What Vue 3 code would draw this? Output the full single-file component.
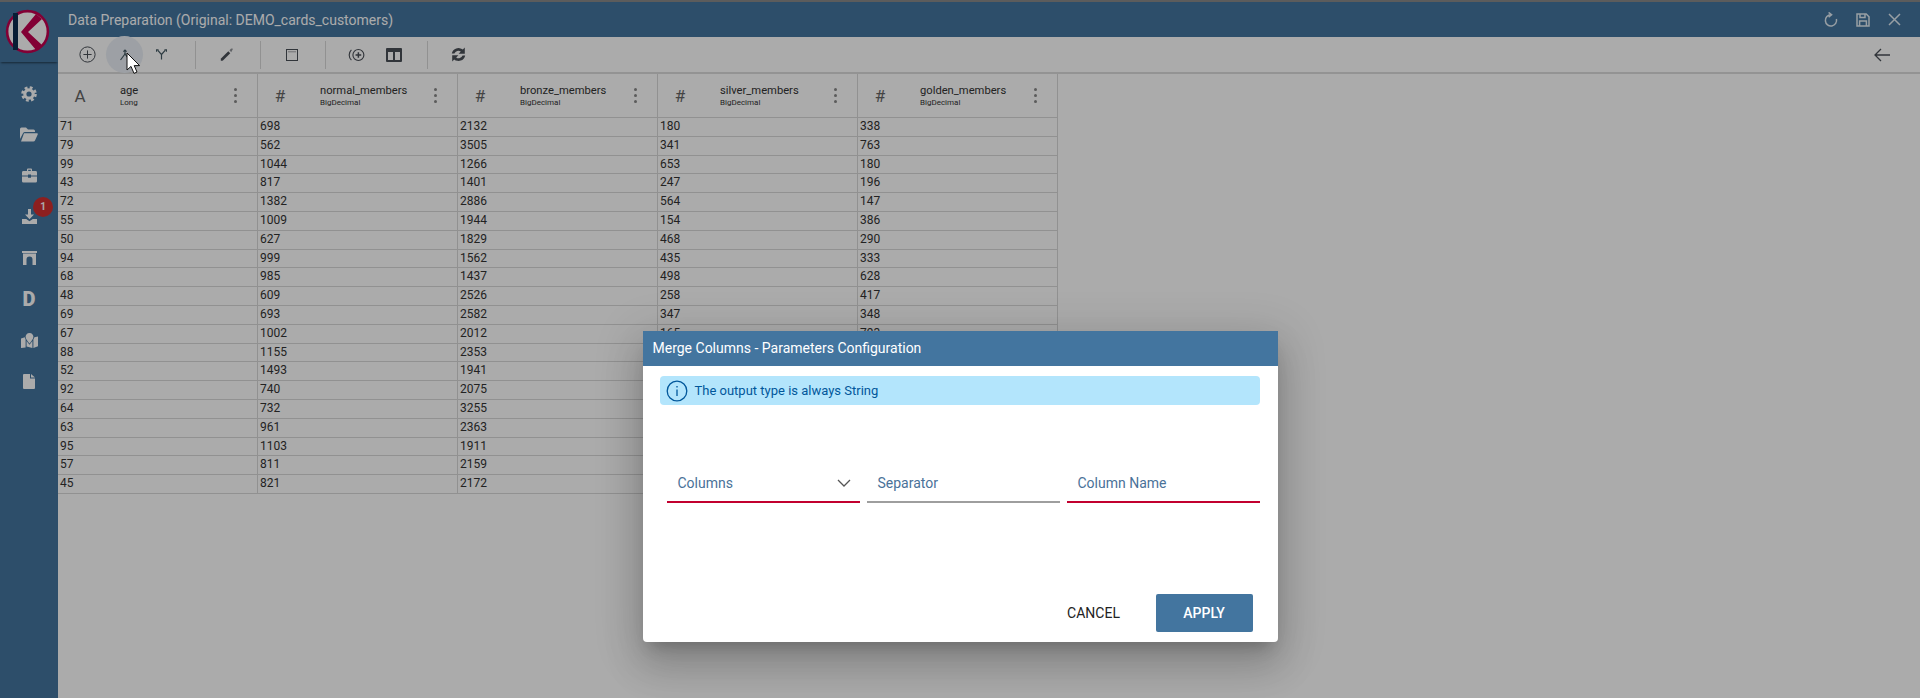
<template>
  <div class="app">
    <aside class="sidebar">
      <div class="logo">
        <svg width="46" height="46" viewBox="0 0 46 46">
          <circle cx="22.5" cy="23.5" r="20.4" fill="#fff" stroke="#c2004f" stroke-width="2.6" />
          <rect x="8" y="5" width="5" height="37" fill="#0d2c4f" />
          <path d="M31 6 L16 24 L31 42 L37 37 L23 24 L37 11 Z" fill="#c2004f" />
        </svg>
      </div>
      <nav class="side-nav">
        <div class="side-item">
          <svg width="16" height="16" viewBox="0 0 16 16" fill="none" stroke="currentColor">
            <circle cx="8" cy="8" r="4.2" stroke-width="3.2" />
            <circle cx="8" cy="8" r="6.5" stroke-width="2.6" stroke-dasharray="2.8 2.3" />
          </svg>
        </div>
        <div class="side-item">
          <svg width="18" height="15" viewBox="0 0 18 15" fill="currentColor">
            <path d="M0 2 Q0 .5 1.5 .5 H6 L8 2.5 H13.5 Q15 2.5 15 4 V5 H5 Q3.6 5 3 6.2 L0 12 Z" />
            <path d="M4 6.2 H17 Q18.2 6.2 17.7 7.4 L15 13.4 Q14.6 14.5 13.4 14.5 H1 Z" />
          </svg>
        </div>
        <div class="side-item">
          <svg width="15" height="15" viewBox="0 0 15 15" fill="currentColor">
            <path d="M5 3 V1.6 Q5 .6 6 .6 H9 Q10 .6 10 1.6 V3 H13.6 Q15 3 15 4.4 V7.4 H9 V6.4 H6 V7.4 H0 V4.4 Q0 3 1.4 3 Z M6.2 1.8 V3 H8.8 V1.8 Z" fill-rule="evenodd" />
            <path d="M0 8.6 H6 V9.8 H9 V8.6 H15 V13.2 Q15 14.6 13.6 14.6 H1.4 Q0 14.6 0 13.2 Z" />
          </svg>
        </div>
        <div class="side-item">
          <svg width="15" height="15" viewBox="0 0 15 15" fill="currentColor">
            <path d="M6 0 H9 V5.4 H12 L7.5 10.2 L3 5.4 H6 Z" />
            <path d="M0 10 H4.2 L7.5 12.2 L10.8 10 H15 V15 H0 Z" />
          </svg>
          <span class="badge">1</span>
        </div>
        <div class="side-item">
          <svg width="15" height="14" viewBox="0 0 15 14" fill="currentColor">
            <path d="M0 0 H15 V2 H0 Z" />
            <path d="M1 2.5 H14 V14 H10.5 V8.5 Q10.5 5.5 7.5 5.5 Q4.5 5.5 4.5 8.5 V14 H1 Z" />
          </svg>
        </div>
        <div class="side-item side-letter">D</div>
        <div class="side-item">
          <svg width="17" height="15" viewBox="0 0 17 15" fill="currentColor">
            <path d="M8.5 0 C6 0 4.6 1.9 4.6 3.8 C4.6 5.8 7 8.8 8.5 10.6 C10 8.8 12.4 5.8 12.4 3.8 C12.4 1.9 11 0 8.5 0 Z" />
            <path d="M0 5.6 L3.8 4.2 L4.6 6.4 V14.4 L0 15 Z M5.6 8 L8.5 11.8 L11.4 8 V15 L5.6 13.6 Z M12.4 6.4 L13.4 4.2 L17 3.6 V13.2 L12.4 15 Z" />
          </svg>
        </div>
        <div class="side-item">
          <svg width="12" height="15" viewBox="0 0 12 15" fill="currentColor">
            <path d="M1 0 H7 V4.5 H12 V14 Q12 15 11 15 H1 Q0 15 0 14 V1 Q0 0 1 0 Z" />
            <path d="M8 0 L12 3.6 H8 Z" />
          </svg>
        </div>
      </nav>
    </aside>

    <main class="main">
      <header class="title-bar">
        <span class="title-text">Data Preparation (Original: DEMO_cards_customers)</span>
        <div class="title-actions">
          <button class="title-btn">
            <svg width="16" height="16" viewBox="0 0 16 16" fill="none" stroke="currentColor" stroke-width="1.5">
              <path d="M8 2.8 A5.6 5.6 0 1 0 13.4 7" />
              <path d="M5.6 .4 L8.6 2.8 L5.6 5.2" />
            </svg>
          </button>
          <button class="title-btn">
            <svg width="14" height="14" viewBox="0 0 14 14" fill="none" stroke="currentColor" stroke-width="1.5">
              <path d="M1 1 H10.2 L13 3.8 V13 H1 Z" />
              <path d="M4 1 V4.4 H9 V1" />
              <path d="M3.6 13 V8 H10.4 V13" />
            </svg>
          </button>
          <button class="title-btn">
            <svg width="13" height="13" viewBox="0 0 13 13" fill="none" stroke="currentColor" stroke-width="1.5">
              <path d="M1 1 L12 12 M12 1 L1 12" />
            </svg>
          </button>
        </div>
      </header>

      <div class="toolbar">
        <button class="tool-btn">
          <svg width="17" height="17" viewBox="0 0 17 17" fill="none" stroke="currentColor" stroke-width="1">
            <circle cx="8.5" cy="8.5" r="7.6" />
            <path d="M8.5 4.4 V12.6 M4.4 8.5 H12.6" />
          </svg>
        </button>
        <button class="tool-btn tool-hover">
          <svg width="12" height="12" viewBox="0 0 12 12" fill="none" stroke="#455a64" stroke-width="1.2">
            <path d="M1.5 11 L6 5 L10.5 11" />
            <path d="M6 5 V1 M4.4 2.6 L6 1 L7.6 2.6" />
          </svg>
        </button>
        <button class="tool-btn">
          <svg width="11" height="11" viewBox="0 0 12 12" fill="none" stroke="#455a64" stroke-width="1.3">
            <path d="M6 11.5 V6 L2 1.6 M6 6 L10 1.6" />
            <path d="M.6 3 V1 H2.8 M9.2 1 H11.4 V3" />
          </svg>
        </button>
        <span class="tool-sep"></span>
        <button class="tool-btn">
          <svg width="14" height="13" viewBox="0 0 16 16" fill="currentColor">
            <path d="M.6 13 L9.6 4 L12 6.4 L3 15.4 Q1.6 15.8 .4 15.6 Q.2 14.4 .6 13 Z" />
            <path d="M11 2.8 L13.2 .6 L15.4 .8 L13.2 5.2 Z" opacity=".6" />
          </svg>
        </button>
        <span class="tool-sep"></span>
        <button class="tool-btn">
          <svg width="12" height="12" viewBox="0 0 12 12" fill="none" stroke="currentColor" stroke-width="1">
            <rect x=".5" y=".5" width="11" height="11" />
            <path d="M2.5 2.8 H9.5" stroke-dasharray="1 1" />
          </svg>
        </button>
        <span class="tool-sep"></span>
        <button class="tool-btn">
          <svg width="17" height="14" viewBox="0 0 18 14" fill="none" stroke="currentColor" stroke-width="1.2">
            <circle cx="11" cy="7" r="5.8" />
            <path d="M11 4 V10 M8 7 H14" stroke-width="1.6" />
            <path d="M3.6 1.6 A7.4 7.4 0 0 0 3.6 12.4" />
          </svg>
        </button>
        <button class="tool-btn">
          <svg width="16" height="14" viewBox="0 0 16 14" fill="currentColor">
            <path d="M1 0 H15 Q16 0 16 1 V13 Q16 14 15 14 H1 Q0 14 0 13 V1 Q0 0 1 0 Z M2 4 V12 H7 V4 Z M9 4 V12 H14 V4 Z" fill-rule="evenodd" />
          </svg>
        </button>
        <span class="tool-sep"></span>
        <button class="tool-btn">
          <svg width="15" height="15" viewBox="0 0 15 15" fill="currentColor">
            <path d="M.8 6.4 A6.8 6.8 0 0 1 11.8 2.6 L13.8 .6 V6.8 H7.6 L9.8 4.6 A4.2 4.2 0 0 0 3.4 6.4 Z" />
            <path d="M14.2 8.6 A6.8 6.8 0 0 1 3.2 12.4 L1.2 14.4 V8.2 H7.4 L5.2 10.4 A4.2 4.2 0 0 0 11.6 8.6 Z" />
          </svg>
        </button>
        <button class="tool-btn tool-back">
          <svg width="16" height="14" viewBox="0 0 16 14" fill="none" stroke="currentColor" stroke-width="1.3">
            <path d="M16 7 H1 M7 1 L1 7 L7 13" />
          </svg>
        </button>
      </div>

      <div class="grid">
        <div class="grid-head">
          <div v-for="col in columns" :key="col.name" class="head-cell">
            <span class="type-icon">{{ col.icon }}</span>
            <div class="head-text">
              <div class="col-name">{{ col.name }}</div>
              <div class="col-type">{{ col.type }}</div>
            </div>
            <span class="kebab"><i></i><i></i><i></i></span>
          </div>
        </div>
        <div v-for="(row, index) in rows" :key="index" class="grid-row">
          <div v-for="(value, i) in row" :key="i" class="grid-cell">{{ value }}</div>
        </div>
      </div>
    </main>

    <!-- dialog + dimmed page -->
    <div class="overlay">
      <section class="dialog">
        <div class="dialog-title">Merge Columns - Parameters Configuration</div>
        <div class="dialog-body">
          <div class="alert">
            <svg width="22" height="22" viewBox="0 0 22 22" fill="none" stroke="#01579b" stroke-width="1.3">
              <circle cx="11" cy="11" r="9.8" />
              <path d="M11 9.6 V16" />
              <path d="M11 6 V7.6" />
            </svg>
            <span>The output type is always String</span>
          </div>
          <div class="fields">
            <div class="field field-error">
              <span>Columns</span>
              <svg width="14" height="8" viewBox="0 0 14 8" fill="none" stroke="#555" stroke-width="1.3">
                <path d="M1 1 L7 7 L13 1" />
              </svg>
            </div>
            <div class="field"><span>Separator</span></div>
            <div class="field field-error"><span>Column Name</span></div>
          </div>
        </div>
        <div class="dialog-actions">
          <button class="btn-cancel">CANCEL</button>
          <button class="btn-apply">APPLY</button>
        </div>
      </section>
    </div>

    <svg class="cursor" width="15" height="23" viewBox="0 0 15 23">
      <path d="M1 1 V18 L5 14.4 L8 21.4 L11 20 L8.2 13.6 H13.6 Z" fill="#fff" stroke="#111" stroke-width="1" />
    </svg>
  </div>
</template>

<script setup>
const columns = [
  { name: 'age', type: 'Long', icon: 'A' },
  { name: 'normal_members', type: 'BigDecimal', icon: '#' },
  { name: 'bronze_members', type: 'BigDecimal', icon: '#' },
  { name: 'silver_members', type: 'BigDecimal', icon: '#' },
  { name: 'golden_members', type: 'BigDecimal', icon: '#' },
]

const rows = [
  [71, 698, 2132, 180, 338],
  [79, 562, 3505, 341, 763],
  [99, 1044, 1266, 653, 180],
  [43, 817, 1401, 247, 196],
  [72, 1382, 2886, 564, 147],
  [55, 1009, 1944, 154, 386],
  [50, 627, 1829, 468, 290],
  [94, 999, 1562, 435, 333],
  [68, 985, 1437, 498, 628],
  [48, 609, 2526, 258, 417],
  [69, 693, 2582, 347, 348],
  [67, 1002, 2012, 165, 793],
  // the last two columns of these rows are behind the dialog
  [88, 1155, 2353, '', ''],
  [52, 1493, 1941, '', ''],
  [92, 740, 2075, '', ''],
  [64, 732, 3255, '', ''],
  [63, 961, 2363, '', ''],
  [95, 1103, 1911, '', ''],
  [57, 811, 2159, '', ''],
  [45, 821, 2172, '', ''],
]
</script>

<style>
html,
body {
  margin: 0;
  overflow: hidden;
}
</style>

<style scoped>
.app {
  position: relative;
  display: flex;
  width: 1920px;
  height: 698px;
  box-sizing: border-box;
  border-top: 2px solid #5c5c5c;
  background: #fff;
  font-family: Roboto, "Liberation Sans", sans-serif;
  color: #333;
  overflow: hidden;
}

button {
  border: none;
  background: none;
  padding: 0;
  font-family: inherit;
}

/* left bar */
.sidebar {
  width: 58px;
  flex-shrink: 0;
  background: #43759f;
  color: #fff;
}

.logo {
  height: 60px;
  box-sizing: border-box;
  padding: 6px 0 0 5px;
  box-shadow: 0 2px 2px -1px rgba(0, 0, 0, 0.5);
}

.logo svg {
  display: block;
}

.side-nav {
  padding-top: 11px;
}

.side-item {
  position: relative;
  height: 41.1px;
  display: flex;
  align-items: center;
  justify-content: center;
}

.side-letter {
  font-size: 20px;
  font-weight: 900;
}

.badge {
  position: absolute;
  top: 1px;
  left: 33px;
  width: 20px;
  height: 20px;
  border-radius: 50%;
  background: #d32f2f;
  color: #fff;
  font-size: 10px;
  font-weight: 700;
  line-height: 20px;
  text-align: center;
}

.main {
  flex: 1;
  min-width: 0;
}

/* title bar */
.title-bar {
  height: 35px;
  display: flex;
  align-items: center;
  justify-content: space-between;
  padding: 0 10px;
  background: #43759f;
  color: #fff;
}

.title-text {
  font-size: 14px;
}

.title-actions {
  display: flex;
  color: #fff;
}

.title-btn {
  width: 31.5px;
  height: 35px;
  display: flex;
  align-items: center;
  justify-content: center;
  color: #e3edf5;
}

/* toolbar */
.toolbar {
  height: 35px;
  display: flex;
  align-items: center;
  padding: 0 20px 0 11px;
  background: #fff;
  border-bottom: 2px solid #dcdcdc;
  color: #555;
}

.tool-btn {
  width: 37px;
  height: 35px;
  flex-shrink: 0;
  display: flex;
  align-items: center;
  justify-content: center;
  color: #4a4f57;
}

.tool-hover {
  height: 37px;
  border-radius: 50%;
  background: #eaeff6;
}

.tool-sep {
  width: 1px;
  height: 28px;
  margin: 0 12px 0 15px;
  flex-shrink: 0;
  background: #d8d8d8;
}

.tool-back {
  margin-left: auto;
}

/* data grid */
.grid {
  width: 1000px;
}

.grid-head,
.grid-row {
  display: flex;
  border-bottom: 1px solid #d8d8d8;
  box-sizing: border-box;
}

.grid-head {
  height: 44px;
}

.grid-row {
  height: 18.8px;
}

.head-cell {
  width: 200px;
  box-sizing: border-box;
  display: flex;
  align-items: center;
  border-right: 1px solid #d8d8d8;
}

.type-icon {
  width: 44px;
  margin-right: 2px;
  text-align: center;
  font-size: 17px;
  color: #666;
}

.head-text {
  flex: 1;
  margin-left: 16px;
  color: #333;
}

.col-name {
  font-size: 11.2px;
  line-height: 14px;
}

.col-type {
  font-size: 8px;
  line-height: 9px;
}

.kebab {
  width: 3px;
  margin-right: 20px;
  display: flex;
  flex-direction: column;
  gap: 3.3px;
}

.kebab i {
  width: 3px;
  height: 3px;
  border-radius: 50%;
  background: #888;
}

.grid-cell {
  width: 200px;
  box-sizing: border-box;
  padding-left: 2px;
  border-right: 1px solid #d8d8d8;
  font-size: 12px;
  line-height: 17.8px;
  color: #333;
}

/* dialog */
.overlay {
  position: absolute;
  inset: -2px 0 0 0;
  display: flex;
  justify-content: center;
  align-items: flex-start;
  padding-top: 331px;
  background: rgba(0, 0, 0, 0.33);
}

.dialog {
  width: 635px;
  height: 311px;
  display: flex;
  flex-direction: column;
  background: #fff;
  border-radius: 0 0 4px 4px;
  box-shadow: 0 11px 15px -7px rgba(0, 0, 0, 0.2), 0 24px 38px 3px rgba(0, 0, 0, 0.14), 0 9px 46px 8px rgba(0, 0, 0, 0.12);
}

.dialog-title {
  height: 35px;
  padding-left: 10px;
  background: #43759f;
  color: #fff;
  font-size: 14px;
  line-height: 35px;
}

.dialog-body {
  padding: 10px 18px 0 17px;
}

.alert {
  height: 29px;
  display: flex;
  align-items: center;
  gap: 7px;
  padding-left: 6px;
  background: #b3e5fc;
  border-radius: 4px;
  color: #01579b;
  font-size: 13px;
}

.fields {
  display: flex;
  gap: 7px;
  margin: 70px 0 0 7px;
}

.field {
  flex: 1;
  height: 28px;
  display: flex;
  align-items: center;
  justify-content: space-between;
  box-sizing: border-box;
  padding: 0 9px 10px 11px;
  border-bottom: 2px solid #9e9e9e;
  color: #4a7299;
  font-size: 14px;
}

.field-error {
  border-bottom-color: #c2002f;
}

.dialog-actions {
  margin-top: auto;
  display: flex;
  align-items: center;
  justify-content: flex-end;
  gap: 18px;
  padding: 0 25px 10px 0;
}

.btn-cancel {
  width: 88px;
  height: 38px;
  color: #222;
  font-size: 14px;
}

.btn-apply {
  width: 97px;
  height: 38px;
  background: #43759f;
  border-radius: 2px;
  color: #fff;
  font-size: 14px;
  font-weight: 500;
}

.cursor {
  position: absolute;
  left: 126px;
  top: 50px;
}
</style>
